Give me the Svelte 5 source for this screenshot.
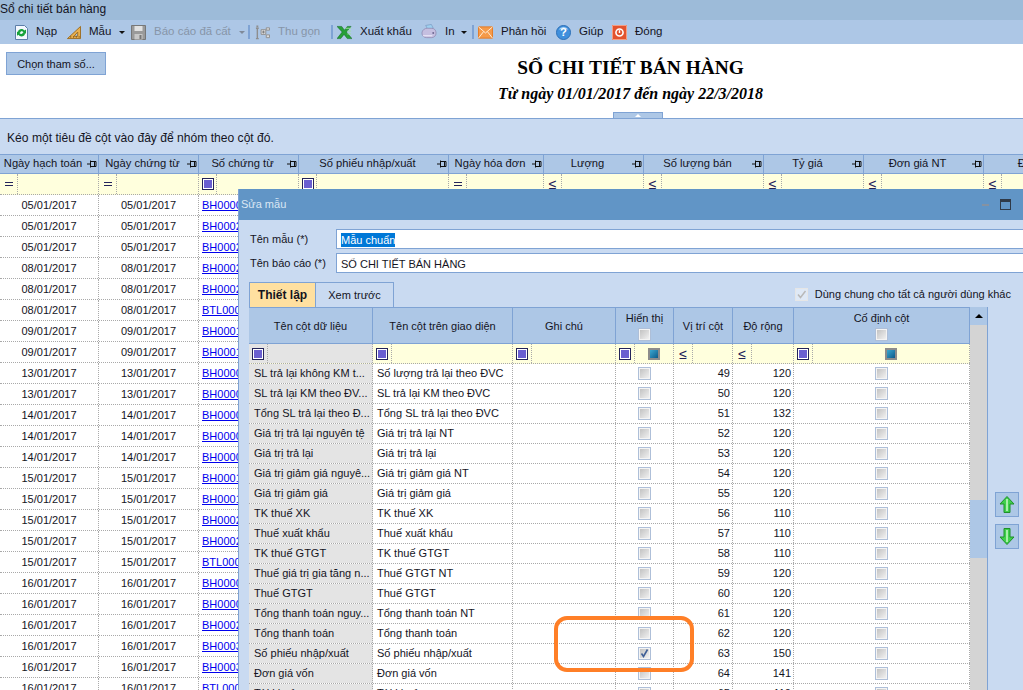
<script>
  const dates = ['05','05','05','08','08','08','09','09','13','13','14','14','14','15','15','15','15','15','16','16','16','16','16','16'];
  const codes = ['BH00001','BH00021','BH00022','BH00023','BH00024','BTL00001','BH00011','BH00012','BH00003','BH00004','BH00005','BH00006','BH00007','BH00013','BH00014','BH00025','BH00026','BTL00002','BH00008','BH00009','BH00027','BH00031','BH00032','BTL00003'];
  const mainRows = dates.map((d, i) => ({ date: `${d}/01/2017`, code: codes[i] }));

  const heads = [
    ['Ngày hạch toán', '='], ['Ngày chứng từ', '='], ['Số chứng từ', 'sq'], ['Số phiếu nhập/xuất', 'sq'],
    ['Ngày hóa đơn', '='], ['Lượng', 'le'], ['Số lượng bán', 'le'], ['Tỷ giá', 'le'], ['Đơn giá NT', 'le'], ['Đơn giá', 'le']
  ];

  const cfg = [
    ['SL trả lại không KM t...', 'Số lượng trả lại theo ĐVC', 49, 120],
    ['SL trả lại KM theo ĐV...', 'SL trả lại KM theo ĐVC', 50, 120],
    ['Tổng SL trả lại theo Đ...', 'Tổng SL trả lại theo ĐVC', 51, 132],
    ['Giá trị trả lại nguyên tệ', 'Giá trị trả lại NT', 52, 120],
    ['Giá trị trả lại', 'Giá trị trả lại', 53, 120],
    ['Giá trị giảm giá nguyê...', 'Giá trị giảm giá NT', 54, 120],
    ['Giá trị giảm giá', 'Giá trị giảm giá', 55, 120],
    ['TK thuế XK', 'TK thuế XK', 56, 110],
    ['Thuế xuất khẩu', 'Thuế xuất khẩu', 57, 110],
    ['TK thuế GTGT', 'TK thuế GTGT', 58, 110],
    ['Thuế giá trị gia tăng n...', 'Thuế GTGT NT', 59, 120],
    ['Thuế GTGT', 'Thuế GTGT', 60, 120],
    ['Tổng thanh toán nguy...', 'Tổng thanh toán NT', 61, 120],
    ['Tổng thanh toán', 'Tổng thanh toán', 62, 120],
    ['Số phiếu nhập/xuất', 'Số phiếu nhập/xuất', 63, 150],
    ['Đơn giá vốn', 'Đơn giá vốn', 64, 141],
    ['Tài khoản', 'Tài khoản', 65, 110]
  ];
</script>

{#snippet pin()}
  <svg class="pin" width="10" height="8" viewBox="0 0 10 8"><path d="M0 4h3M3.500 .5v7M3.500 1.500h5.500v5h-5.500M7.500 1.500v5" fill="none" stroke="#111" stroke-width="1"/></svg>
{/snippet}
{#snippet sq()}
  <span class="sq"><i></i></span>
{/snippet}
{#snippet le()}
  <span class="le">≤</span>
{/snippet}
{#snippet eq()}
  <span class="eq"></span>
{/snippet}
{#snippet check(on)}
  <span class="cb">
    {#if on}
      <svg width="9" height="9" viewBox="0 0 9 9"><path d="M1.500 4.500l2 3 4-7" fill="none" stroke="#3f5f96" stroke-width="1.600"/></svg>
    {/if}
  </span>
{/snippet}
{#snippet teal()}
  <span class="teal"><i></i></span>
{/snippet}

<div class="app">
  <div class="titlebar">Sổ chi tiết bán hàng</div>

  <div class="toolbar">
    <span class="grip"></span>
    <span class="tool">
      <svg width="13" height="15" viewBox="0 0 13 15"><path d="M.5.500h9l3 3v11h-12z" fill="#f4f8ff" stroke="#5c7ea8"/><path d="M3 6.500C3.500 3.500 8 3 9.500 5.500L11 4.500V8.500H7L8.500 7.200C7.500 6 5.500 6 5 7.500zM10 8.800C9.500 11.800 5 12.300 3.500 9.800L2 10.800V6.800h4L4.500 8.100C5.500 9.300 7.500 9.300 8 7.800z" fill="#17a23a"/></svg>
      <span class="lb w-nap">Nạp</span>
    </span>
    <span class="tool">
      <svg width="14" height="15" viewBox="0 0 15 15"><path d="M14.500 1v13H.5zM11.500 7l-4 4.500h4z" fill="#e9b04e" fill-rule="evenodd" stroke="#9a6a1e"/><path d="M4 13v-1.500M7 13v-1.500M10 13v-1.500M13 13v-1.500" stroke="#7a4e10"/></svg>
      <span class="lb w-mau">Mẫu</span>
    </span>
    <span class="caret"></span>
    <span class="tool g6 off">
      <svg width="15" height="15" viewBox="0 0 15 15"><path d="M.5.500h14v14H.5z" fill="#9a9a9a" stroke="#777"/><path d="M3.500 1h8v5h-8z" fill="#e2e2e2"/><path d="M3.500 9h8v5.500h-8z" fill="#c8c8c8"/><path d="M8.500 10h2v4h-2z" fill="#777"/></svg>
      <span class="lb w-bao">Báo cáo đã cất</span>
    </span>
    <span class="caret off-caret"></span>
    <span class="sep"></span>
    <span class="tool g5 off">
      <svg width="15" height="15" viewBox="0 0 16 15"><path d="M1 3h3M1 14h3M2.500 3v11" stroke="#8e8e8e" stroke-width="1.500" fill="none"/><path d="M1.500 0h2v2h-2z" fill="#8e8e8e"/><path d="M6.500 4.500h5v5h-5zM12 2.500h3.500v2.500H12zM12 10h3.500v3H12z" fill="#ddd" stroke="#8e8e8e"/><path d="M7.500 7h3M9 5.500v3" stroke="#777"/></svg>
      <span class="lb w-thu">Thu gọn</span>
    </span>
    <span class="sep wide"></span>
    <span class="tool g4">
      <svg width="15" height="15" viewBox="0 0 16 15"><path d="M0 1h5l3 4 3-4h4l-5 6 6 7h-5l-3.500-4.500L4 14H0l5.500-7z" fill="#27a038" stroke="#0d5f1c" stroke-width=".5"/><path d="M9 3h6M11 6h4M11 9h4" stroke="#9fe09f"/></svg>
      <span class="lb w-xuat">Xuất khẩu</span>
    </span>
    <span class="tool">
      <svg width="16" height="16" viewBox="0 0 17 16"><path d="M5 1l6-1 2 4-6 1z" fill="#9fd0f0" stroke="#6f8fb8" stroke-width=".6"/><path d="M1 9c0-3 3-5 6-5h4c3 0 5 2 5 5s-2 5-5 5H6c-3 0-5-2-5-5z" fill="#c5bfe0" stroke="#8880a8" stroke-width=".7"/><circle cx="13" cy="9" r="1" fill="#6d6590"/><path d="M2 12h10" stroke="#f1eefb"/></svg>
      <span class="lb w-in">In</span>
    </span>
    <span class="caret"></span>
    <span class="sep small"></span>
    <span class="tool g4">
      <svg width="15" height="13" viewBox="0 0 16 13"><path d="M.5.500h15v12H.5z" fill="#f59a4a" stroke="#e57a20"/><path d="M.5.500L8 7l7.500-6.500M.5 12.500L6 5.500M15.500 12.500L10 5.500" fill="none" stroke="#fff0dc"/></svg>
      <span class="lb w-phan">Phản hồi</span>
    </span>
    <span class="tool g8">
      <svg width="15" height="15" viewBox="0 0 16 16"><circle cx="8" cy="8" r="7.500" fill="#3f8fdc" stroke="#2a6db4"/><path d="M3 5c2-4 8-4 10 0-3-1.500-7-1.500-10 0z" fill="#a9d2f5"/><text x="8" y="12" text-anchor="middle" class="q">?</text></svg>
      <span class="lb w-giup">Giúp</span>
    </span>
    <span class="tool g8">
      <svg width="15" height="15" viewBox="0 0 16 16"><path d="M0 0h16v16H0z" fill="#e2532e"/><path d="M.5.500h15v15H.5z" fill="none" stroke="#f5a58c"/><circle cx="8" cy="8" r="3.800" fill="none" stroke="#fff" stroke-width="1.700"/><path d="M8 5.500v3" stroke="#fff" stroke-width="1.500"/></svg>
      <span class="lb">Đóng</span>
    </span>
  </div>

  <div class="report">
    <button class="params">Chọn tham số...</button>
    <div class="heading">
      <h1>SỔ CHI TIẾT BÁN HÀNG</h1>
      <h2>Từ ngày 01/01/2017 đến ngày 22/3/2018</h2>
    </div>
    <span class="collapse"><i></i></span>
  </div>

  <div class="group">Kéo một tiêu đề cột vào đây để nhóm theo cột đó.</div>

  <div class="main">
    <div class="mrow mhead">
      {#each heads as h}
        <div class="mh"><span>{h[0]}</span>{@render pin()}</div>
      {/each}
    </div>
    <div class="mrow mfilter">
      {#each heads as h}
        <div class="mf">
          <span class="op">
            {#if h[1] === '='}{@render eq()}{:else if h[1] === 'sq'}{@render sq()}{:else}{@render le()}{/if}
          </span>
        </div>
      {/each}
    </div>
    {#each mainRows as r}
      <div class="mrow mdata">
        <div class="md ctr">{r.date}</div>
        <div class="md ctr">{r.date}</div>
        <div class="md"><a href="#top">{r.code}</a></div>
        <div class="md rest"></div>
      </div>
    {/each}
  </div>

  <section class="dialog">
    <header class="dtitle">
      <span>Sửa mẫu</span>
      <span class="min"></span>
      <span class="max"></span>
    </header>

    <div class="frow">
      <span class="flabel">Tên mẫu (*)</span>
      <div class="input"><span class="sel">Mẫu chuẩn</span></div>
    </div>
    <div class="frow second">
      <span class="flabel">Tên báo cáo (*)</span>
      <div class="input">SỔ CHI TIẾT BÁN HÀNG</div>
    </div>

    <div class="tabs">
      <span class="tab active">Thiết lập</span>
      <span class="tab">Xem trước</span>
      <span class="share">
        <span class="sharebox"><svg width="11" height="11" viewBox="0 0 11 11"><path d="M2 5.500l2.500 3 5-6.500" fill="none" stroke="#b9b9b9" stroke-width="1.500"/></svg></span>
        Dùng chung cho tất cả người dùng khác
      </span>
    </div>

    <div class="gridarea">
      <div class="tbl">
        <div class="drow dhead">
          <div class="dh">Tên cột dữ liệu</div>
          <div class="dh">Tên cột trên giao diện</div>
          <div class="dh">Ghi chú</div>
          <div class="dh stack"><span>Hiển thị</span>{@render check(false)}</div>
          <div class="dh">Vị trí cột</div>
          <div class="dh">Độ rộng</div>
          <div class="dh stack"><span>Cố định cột</span>{@render check(false)}</div>
        </div>
        <div class="drow dfilter">
          <div class="df gray"><span class="op d">{@render sq()}</span></div>
          <div class="df"><span class="op d">{@render sq()}</span></div>
          <div class="df"><span class="op d">{@render sq()}</span></div>
          <div class="df"><span class="op d">{@render sq()}</span><span class="fval">{@render teal()}</span></div>
          <div class="df"><span class="op d">{@render le()}</span></div>
          <div class="df"><span class="op d">{@render le()}</span></div>
          <div class="df"><span class="op d">{@render sq()}</span><span class="fval">{@render teal()}</span></div>
        </div>
        {#each cfg as c}
          <div class="drow ddata">
            <div class="dd gray">{c[0]}</div>
            <div class="dd">{c[1]}</div>
            <div class="dd"></div>
            <div class="dd mid">{@render check(c[2] === 63)}</div>
            <div class="dd num">{c[2]}</div>
            <div class="dd num">{c[3]}</div>
            <div class="dd mid">{@render check(false)}</div>
          </div>
        {/each}
      </div>

      <div class="scroll">
        <span class="up"></span>
        <div class="track"><span class="thumb"></span></div>
      </div>

      <div class="side">
        <span class="move">
          <svg width="16" height="17" viewBox="0 0 16 17"><path d="M8 .5l7 7.500h-4v8.500H5V8H1z" fill="#3fd04a" stroke="#1f8f2a"/><path d="M8 3v12" stroke="#a8f0a8" stroke-width="2"/></svg>
        </span>
        <span class="move">
          <svg width="16" height="17" viewBox="0 0 16 17"><path d="M8 16.500l7-7.500h-4V.5H5V9H1z" fill="#3fd04a" stroke="#1f8f2a"/><path d="M8 2v12" stroke="#a8f0a8" stroke-width="2"/></svg>
        </span>
      </div>
    </div>
  </section>

  <svg class="mark" width="142" height="58" viewBox="0 0 142 58">
    <rect x="3" y="3" width="136" height="52" rx="11" fill="none" stroke="#ff7f27" stroke-width="4"/>
  </svg>
</div>

<style>
  :global(html), :global(body) { margin: 0; height: 100%; overflow: hidden; background: #fff; }
  .app {
    position: relative; width: 1023px; height: 690px; overflow: hidden;
    font: 11px/1 "Liberation Sans", Arial, sans-serif; color: #14141e;
  }
  .titlebar { height: 20px; background: #9dbbd9; font-size: 12px; line-height: 19px; }
  .toolbar { height: 24px; background: #adc7e6; display: flex; align-items: center; font-size: 11.500px; position: relative; white-space: nowrap; }
  .grip { width: 4px; height: 18px; margin-left: 2px; background: radial-gradient(circle, #8aa2c0 40%, transparent 45%) 0 0 / 2px 2px; }
  .tool { display: inline-flex; align-items: center; gap: 8px; margin-left: 9px; }
  .tool.g4 { margin-left: 4px; }
  .tool.g5 { margin-left: 5px; }
  .tool.g6 { margin-left: 6px; }
  .tool.g8 { margin-left: 8px; }
  .w-nap { width: 22px; }
  .w-mau { width: 24px; }
  .w-bao { width: 78px; }
  .w-thu { width: 44px; }
  .w-xuat { width: 52px; }
  .w-in { width: 10px; }
  .w-phan { width: 47px; }
  .w-giup { width: 25px; }
  .off { color: #8795a8; }
  .caret { width: 0; height: 0; margin-left: 6px; border: 3px solid transparent; border-top: 3.500px solid #111; border-bottom: 0; }
  .off-caret { border-top-color: #7f8a99; margin-left: 7px; }
  .sep { width: 2px; height: 14px; background: #7fa3d4; margin-left: 3px; }
  .sep.wide { margin-left: 9px; }
  .sep.small { margin-left: 5px; }
  .q { font: bold 12px "Liberation Sans", sans-serif; fill: #fff; }

  .report { height: 74px; display: flex; align-items: flex-start; position: relative; background: #fff; }
  .params {
    width: 100px; height: 23px; margin: 8px 0 0 6px; padding: 0; box-sizing: border-box;
    background: #adc7e6; border: 1px solid #7fa3d4; font: 11px "Liberation Sans", sans-serif; color: #14141e;
  }
  .heading { flex: 1; padding-left: 132px; text-align: center; color: #000; font-family: "Liberation Serif", serif; }
  h1 { margin: 13px 0 0; font-size: 19.400px; line-height: 22px; font-weight: bold; }
  h2 { margin: 6px 0 0; font-size: 16px; line-height: 18px; font-weight: bold; font-style: italic; }
  .collapse {
    position: absolute; left: 613px; top: 68px; width: 50px; height: 6px; box-sizing: border-box;
    background: #adc7e6; border: 1px solid #7fa3d4; border-bottom: 0; display: flex; justify-content: center; align-items: center;
  }
  .collapse i { width: 0; height: 0; border: 3px solid transparent; border-bottom: 3px solid #fff; border-top: 0; }

  .group { height: 36px; box-sizing: border-box; background: #c9daf1; border-top: 1px solid #7fa3d4; padding: 12px 0 0 7px; font-size: 12.100px; line-height: 14px; }

  .main { background: #fff; }
  .mrow { display: grid; grid-template-columns: 99px 100px 100px 150px 95px 100px 120px 100px 120px 120px; width: 1104px; }
  .mhead { background: #adc7e6; border-top: 1px solid #7fa3d4; border-bottom: 1px solid #7fa3d4; height: 18px; }
  .mh { position: relative; border-right: 1px solid #7fa3d4; padding-right: 12px; text-align: center; line-height: 17px; font-size: 11.200px; white-space: nowrap; }
  .pin { position: absolute; right: 1px; top: 5px; }
  .mfilter { height: 21px; background: #ffffdd; border-bottom: 1px dotted #a9a9a9; box-sizing: border-box; }
  .mf { border-right: 1px dotted #a9a9a9; display: flex; }
  .op { width: 17px; border-right: 1px dotted #a9a9a9; display: flex; align-items: center; justify-content: center; }
  .op.d { width: 18px; height: 100%; }
  .eq { width: 8px; height: 2px; border-top: 1px solid #23235a; border-bottom: 1px solid #23235a; }
  .sq { width: 12px; height: 12px; box-sizing: border-box; border: 1px solid #23235a; background: #fff; display: flex; align-items: center; justify-content: center; }
  .sq i { width: 8px; height: 8px; background: #6a5fd0; }
  .le { font: 14px "Liberation Sans", sans-serif; color: #23235a; }
  .mdata { height: 21px; box-sizing: border-box; border-bottom: 1px dotted #a9a9a9; }
  .md { border-right: 1px dotted #a9a9a9; line-height: 21px; font-size: 11px; padding-left: 3px; white-space: nowrap; overflow: hidden; }
  .md.ctr { text-align: center; padding: 0; }
  .md.rest { grid-column: 4 / 11; }
  a { color: #0000ee; }

  .dialog {
    position: absolute; left: 238px; top: 189px; right: 0; bottom: 0;
    background: #c9daf1; border-left: 1px solid #7fa3d4; display: flex; flex-direction: column;
  }
  .dtitle { height: 31px; flex: none; background: #6195c6; color: #dbe7f4; display: flex; align-items: center; padding-left: 2px; }
  .dtitle span:first-child { flex: 1; }
  .min { width: 7px; height: 2px; background: #8592a2; margin-right: 11px; }
  .max { width: 9px; height: 7px; border: 1px solid #2f3a48; border-top-width: 3px; margin-right: 12px; }
  .frow { display: flex; align-items: center; height: 20px; margin-top: 9px; padding-left: 11px; }
  .frow.second { margin-top: 4px; }
  .flabel { width: 86px; flex: none; padding-top: 1px; }
  .input { flex: 1; height: 18px; line-height: 20px; background: #fff; border: 1px solid #7fa3d4; border-right: 0; padding-left: 4px; }
  .sel { background: #0078d7; color: #fff; display: inline-block; line-height: 14px; }
  .tabs { display: flex; height: 25px; margin: 9px 0 0 10px; }
  .tab { box-sizing: border-box; width: 78px; border: 1px solid #7fa3d4; border-left: 0; border-bottom: 0; display: flex; align-items: center; justify-content: center; }
  .tab.active { width: 67px; background: #ffe0a0; font-weight: bold; font-size: 12px; border-left: 1px solid #7fa3d4; }
  .share { margin-left: auto; margin-right: 12px; display: flex; align-items: center; gap: 7px; }
  .sharebox { width: 11px; height: 11px; border: 1px solid #e6e6e6; background: #dfe9f6; display: flex; }
  .gridarea { display: flex; flex: 1; margin-left: 10px; min-height: 0; }
  .tbl { width: 721px; flex: none; background: #fff; overflow: hidden; }
  .drow { display: grid; grid-template-columns: 124px 140px 103px 58px 59px 61px 176px; }
  .dhead { background: #adc7e6; border-top: 1px solid #7fa3d4; border-bottom: 1px solid #7fa3d4; height: 35px; }
  .dh { border-right: 1px solid #7fa3d4; display: flex; align-items: center; justify-content: center; white-space: nowrap; padding-top: 1px; }
  .dh.stack { flex-direction: column; gap: 4px; padding-top: 3px; }
  .dfilter { height: 20px; background: #ffffdd; border-bottom: 1px dotted #a9a9a9; box-sizing: border-box; }
  .df { border-right: 1px dotted #a9a9a9; display: flex; }
  .df.gray { background: #e4e4e4; }
  .fval { flex: 1; display: flex; align-items: center; justify-content: center; }
  .teal { width: 8px; height: 8px; border: 2px solid #8c8c8c; display: flex; }
  .teal i { flex: 1; background: linear-gradient(135deg, #3aa7d0, #0d5a8a); }
  .ddata { height: 20px; box-sizing: border-box; border-bottom: 1px dotted #a9a9a9; }
  .dd { border-right: 1px dotted #a9a9a9; padding-left: 4px; line-height: 18px; white-space: nowrap; overflow: hidden; }
  .dd.gray { background: #e4e4e4; padding-left: 5px; }
  .dd.mid { padding: 0; display: flex; align-items: center; justify-content: center; }
  .dd.num { padding: 0 2px 0 0; text-align: right; }
  .cb { width: 11px; height: 11px; border: 1px solid #aebfd8; background: linear-gradient(135deg, #bdbdbd, #f6f6f6); box-shadow: inset 0 0 0 1px #f4f4f4; display: flex; align-items: center; justify-content: center; }
  .scroll { width: 17px; flex: none; background: #d4d4d4; border-right: 1px solid #7fa3d4; display: flex; flex-direction: column; }
  .up { height: 18px; flex: none; background: #adc7e6; display: flex; align-items: center; justify-content: center; }
  .up::before { content: ""; border: 4px solid transparent; border-bottom: 4px solid #000; border-top: 0; }
  .track { flex: 1; }
  .thumb { display: block; height: 58px; margin-top: 175px; background: #adc7e6; }
  .side { display: flex; flex-direction: column; gap: 7px; padding: 185px 0 0 7px; }
  .move { width: 22px; height: 23px; background: #adc7e6; border: 1px solid #7fa3d4; display: flex; align-items: center; justify-content: center; }
  .mark { position: absolute; left: 553px; top: 615px; }
</style>
